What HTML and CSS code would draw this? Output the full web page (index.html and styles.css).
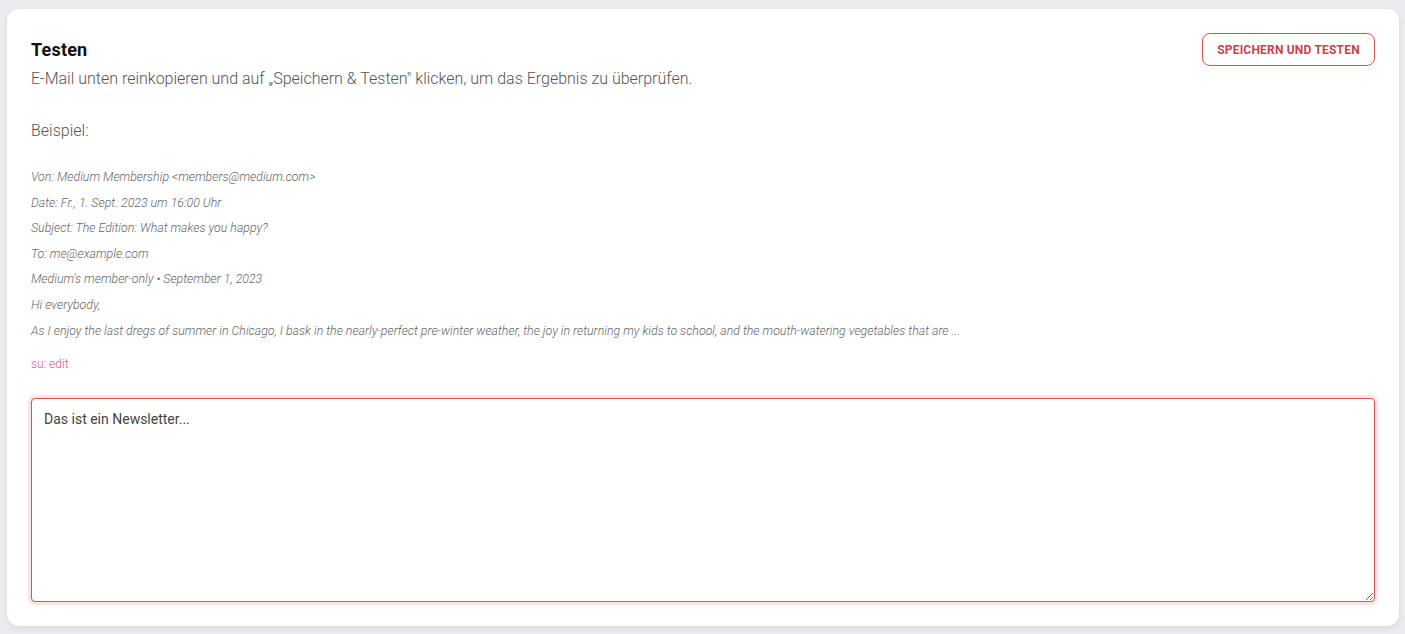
FILE: index.html
```html
<!DOCTYPE html>
<html lang="de">
<head>
  <meta charset="UTF-8">
  <meta name="viewport" content="width=device-width, initial-scale=1.0">
  <title>Testen</title>
  <link rel="stylesheet" href="styles.css">
</head>
<body>
  <div class="card">
    <div class="card-header">
      <div class="heading">
        <h2 class="title">Testen</h2>
        <p class="subtitle">E-Mail unten reinkopieren und auf „Speichern &amp; Testen" klicken, um das Ergebnis zu überprüfen.</p>
      </div>
      <button type="button" class="btn-outline">Speichern und Testen</button>
    </div>

    <p class="example-label">Beispiel:</p>
    <div class="example">
      <p>Von: Medium Membership &lt;members@medium.com&gt;</p>
      <p>Date: Fr., 1. Sept. 2023 um 16:00 Uhr</p>
      <p>Subject: The Edition: What makes you happy?</p>
      <p>To: me@example.com</p>
      <p>Medium's member-only • September 1, 2023</p>
      <p>Hi everybody,</p>
      <p>As I enjoy the last dregs of summer in Chicago, I bask in the nearly-perfect pre-winter weather, the joy in returning my kids to school, and the mouth-watering vegetables that are ...</p>
    </div>
    <a class="edit-link" href="#">su: edit</a>

    <textarea class="mail-input" autofocus>Das ist ein Newsletter...</textarea>
  </div>
</body>
</html>
```

FILE: styles.css
```css
body {
  font-family: 'Roboto', 'Liberation Sans', sans-serif;
  background-color: #ebecef;
  margin: 0;
  padding: 9px 6px 8px 7px;
}
.card {
  background-color: #ffffff;
  border-radius: 12px;
  box-shadow: 0 2px 6px rgba(0, 0, 0, 0.08);
  padding: 24px;
  display: flex;
  flex-direction: column;
}
.card-header {
  display: flex;
  justify-content: space-between;
  align-items: flex-start;
}
.title {
  margin: 3px 0 0 0;
  font-size: 18px;
  line-height: 28px;
  font-weight: 700;
  letter-spacing: 0.2px;
  color: #111;
}
.subtitle {
  margin: 3px 0 0 0;
  font-size: 16px;
  line-height: 24px;
  font-weight: 300;
  color: #555;
}
.btn-outline {
  height: 33px;
  width: 173px;
  background: #fff;
  border: 1px solid #d9534f;
  border-radius: 8px;
  color: #c8444b;
  font-family: inherit;
  font-size: 12px;
  font-weight: 700;
  text-transform: uppercase;
  letter-spacing: 0.2px;
  cursor: pointer;
}
.example-label {
  margin: 28px 0 0 0;
  font-size: 16px;
  line-height: 24px;
  font-weight: 300;
  color: #555;
}
.example {
  margin-top: 22px;
}
.example p {
  margin: 0;
  font-size: 12.35px;
  line-height: 25.6px;
  font-weight: 300;
  font-style: italic;
  color: #666;
}
.edit-link {
  margin-top: 11px;
  font-size: 12px;
  line-height: 18px;
  font-weight: 300;
  color: #d4588a;
  text-decoration: none;
}
.mail-input {
  margin-top: 25px;
  height: 204px;
  box-sizing: border-box;
  padding: 10px 12px;
  border: 1px solid #d9534f;
  border-radius: 4px;
  box-shadow: 0 0 0 3px rgba(217, 83, 79, 0.15);
  outline: none;
  font-family: inherit;
  font-size: 14px;
  line-height: 20px;
  color: #444;
  resize: vertical;
}
```
